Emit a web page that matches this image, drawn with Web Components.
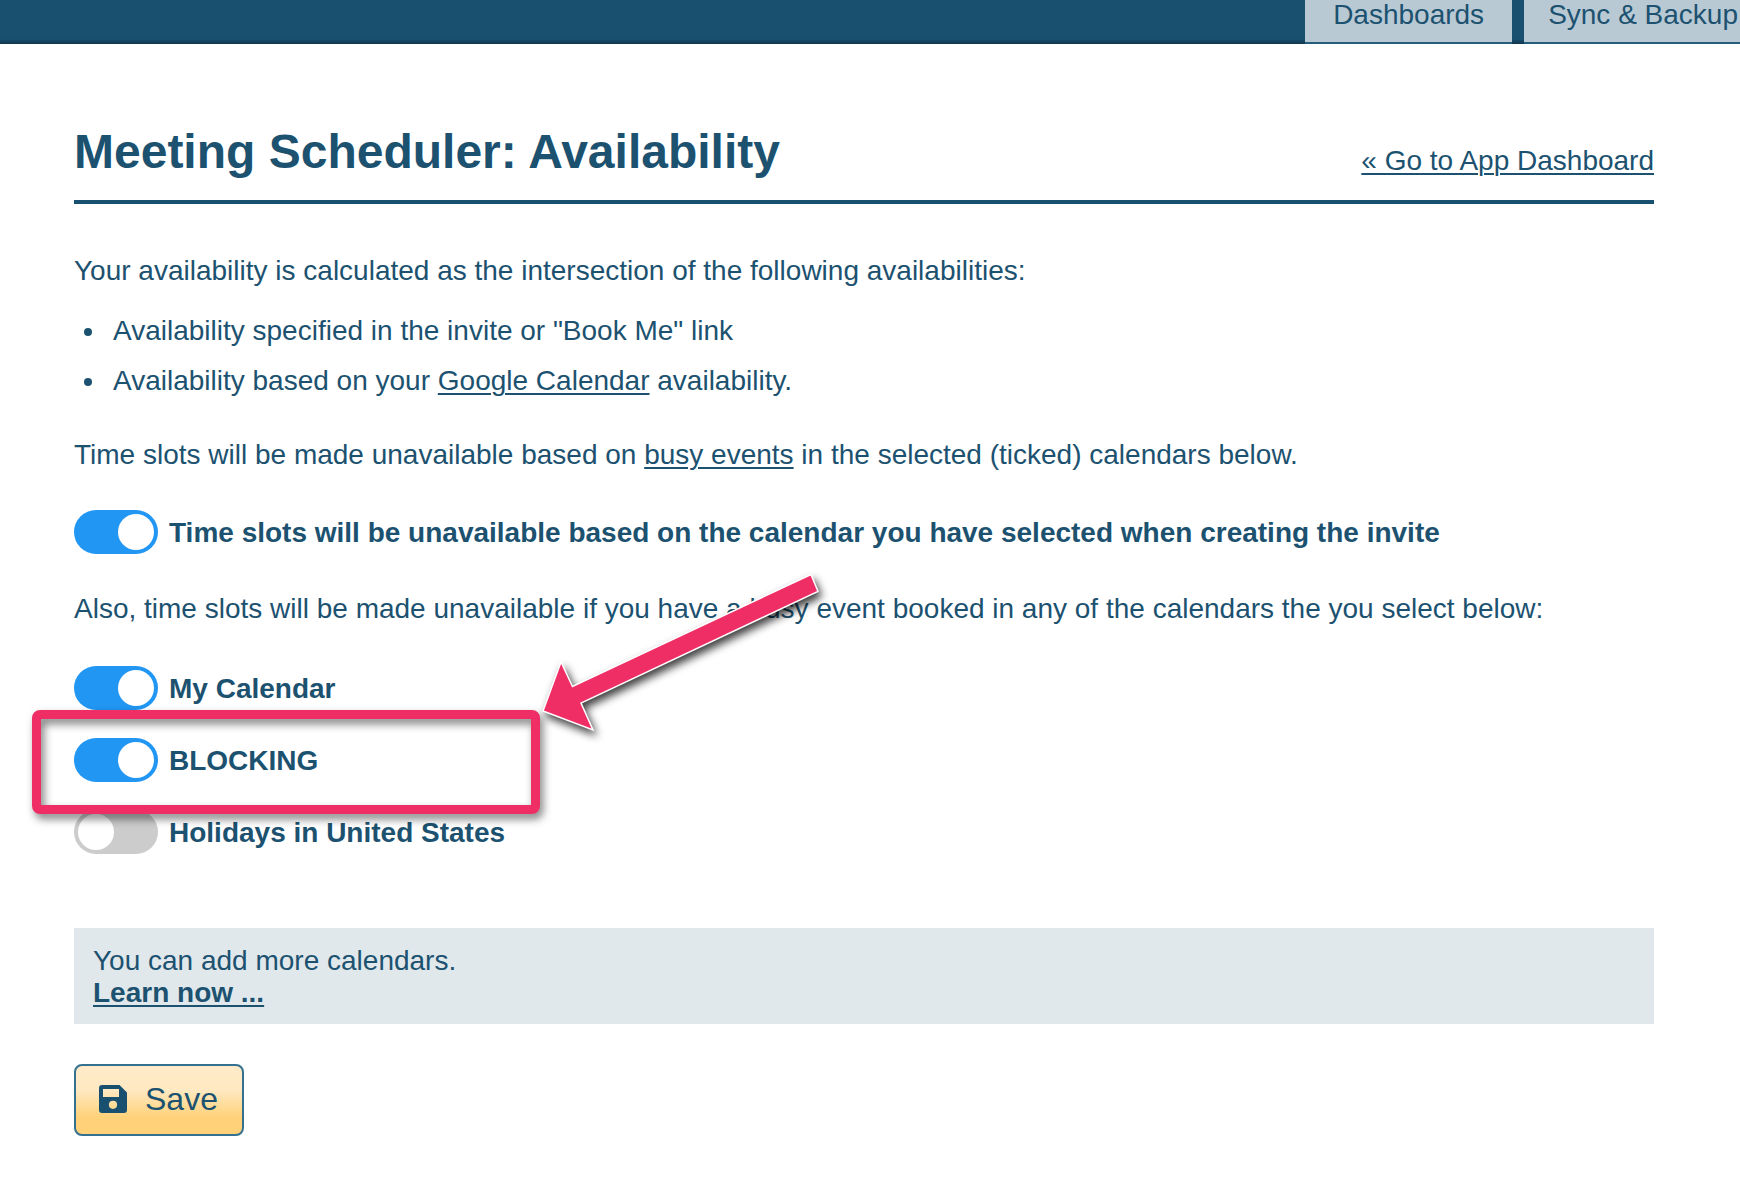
<!DOCTYPE html>
<html lang="en">
<head>
<meta charset="utf-8">
<meta name="viewport" content="width=device-width, initial-scale=1">
<title>Meeting Scheduler: Availability</title>
<style>
    :root {
        --ink: #1c5270;
        --bar: #19506f;
        --tab: #b9c9d4;
        --on: #2196f3;
        --off: #cccccc;
        --mark: #f02e66;
        --note: #e1e8ec;
    }
    body {
        margin: 0;
        background: #fff;
        color: var(--ink);
        font: 28px/32px "Liberation Sans", Arial, sans-serif;
    }
</style>
</head>
<body>
<scheduler-page></scheduler-page>

<script>
class NavTabs extends HTMLElement {
    constructor() {
        super();
        this.attachShadow({ mode: "open" });
        this.shadowRoot.innerHTML = `
            <style>
                :host {
                    display: block;
                    overflow: hidden;
                    background: linear-gradient(var(--bar) 39px, #0f364c 44px);
                }
                nav {
                    display: flex;
                    justify-content: flex-end;
                    gap: 12px;
                    margin-right: -22px;
                }
                ::slotted(a) {
                    padding: 0 28px 12px;
                    line-height: 30px;
                    color: var(--ink);
                    background: var(--tab);
                    border-bottom: 2px solid #255d7c;
                    text-decoration: none;
                    white-space: nowrap;
                }
                ::slotted(a:last-child) {
                    padding-left: 24px;
                    padding-right: 24px;
                }
            </style>
            <nav><slot></slot></nav>
        `;
    }
}

class PageHeading extends HTMLElement {
    constructor() {
        super();
        this.attachShadow({ mode: "open" });
        this.shadowRoot.innerHTML = `
            <style>
                :host {
                    display: flex;
                    justify-content: space-between;
                    align-items: flex-end;
                    padding-bottom: 20px;
                    border-bottom: 4px solid var(--bar);
                }
                h1 {
                    margin: 0;
                    font-size: 48px;
                    line-height: 56px;
                }
                ::slotted(a) {
                    padding-bottom: 3px;
                }
            </style>
            <h1><slot></slot></h1>
            <slot name="link"></slot>
        `;
    }
}

class ToggleSwitch extends HTMLElement {
    constructor() {
        super();
        this.attachShadow({ mode: "open" });
        this.shadowRoot.innerHTML = `
            <style>
                :host {
                    display: block;
                    position: relative;
                }
                label {
                    display: flex;
                    align-items: center;
                    gap: 11px;
                    font-weight: bold;
                }
                span {
                    padding-top: 2px;
                }
                input {
                    appearance: none;
                    display: flex;
                    flex: none;
                    box-sizing: border-box;
                    width: 84px;
                    height: 44px;
                    margin: 0;
                    padding: 4px;
                    border-radius: 22px;
                    background: var(--off);
                }
                input::before {
                    content: "";
                    width: 36px;
                    height: 36px;
                    border-radius: 50%;
                    background: #fff;
                }
                input:checked {
                    justify-content: flex-end;
                    background: var(--on);
                }
            </style>
            <label><input type="checkbox"><span><slot></slot></span></label>
            <slot name="callout"></slot>
        `;
        this.shadowRoot.querySelector("input").checked = this.hasAttribute("checked");
    }
}

// pink frame and arrow, laid over the row it is slotted into
class CalloutMark extends HTMLElement {
    constructor() {
        super();
        this.attachShadow({ mode: "open" });
        this.shadowRoot.innerHTML = `
            <style>
                :host {
                    position: absolute;
                    z-index: 1;
                    top: -28px;
                    left: -42px;
                    width: 508px;
                    height: 104px;
                    pointer-events: none;
                }
                .frame {
                    box-sizing: border-box;
                    height: 100%;
                    border: 9px solid var(--mark);
                    border-radius: 8px;
                    filter: drop-shadow(3px 5px 4px rgba(0, 0, 0, .5));
                }
                svg {
                    position: absolute;
                    left: 500px;
                    bottom: 68px;
                    overflow: visible;
                    filter: drop-shadow(3px 5px 4px rgba(0, 0, 0, .75));
                }
            </style>
            <div class="frame"></div>
            <svg width="300" height="180" viewBox="0 0 300 180" aria-hidden="true">
                <path d="M11 145 29 96 40.500 120.500 279 8.500 286 25.500 49 137 61 164Z"
                    fill="#f02e66" stroke="#fff" stroke-width="1.500"/>
            </svg>
        `;
    }
}

class InfoNote extends HTMLElement {
    constructor() {
        super();
        this.attachShadow({ mode: "open" });
        this.shadowRoot.innerHTML = `
            <style>
                :host {
                    display: flex;
                    flex-direction: column;
                    align-items: flex-start;
                    padding: 17px 19px 15px;
                    background: var(--note);
                }
            </style>
            <slot></slot>
        `;
    }
}

class SaveButton extends HTMLElement {
    constructor() {
        super();
        this.attachShadow({ mode: "open" });
        this.shadowRoot.innerHTML = `
            <style>
                :host {
                    display: flex;
                }
                button {
                    display: flex;
                    align-items: center;
                    gap: 18px;
                    padding: 15px 24px 17px 23px;
                    border: 2px solid #34708f;
                    border-radius: 8px;
                    background: linear-gradient(#ffebca, #ffe9c2 35%, #ffd27a 75%, #ffd27a);
                    color: inherit;
                    font: inherit;
                    font-size: 32px;
                    line-height: 36px;
                }
            </style>
            <button type="submit">
                <svg width="28" height="28" viewBox="0 0 28 28" aria-hidden="true">
                    <path fill="#19506f" fill-rule="evenodd"
                        d="M3 0H20.500L28 7.500V25a3 3 0 0 1-3 3H3a3 3 0 0 1-3-3V3a3 3 0 0 1 3-3Z
                           M4 4V12H20V4Z M14 15.700a4.100 4.100 0 1 0 0 8.200a4.100 4.100 0 1 0 0-8.200Z"/>
                </svg>
                <slot></slot>
            </button>
        `;
    }
}

class SchedulerPage extends HTMLElement {
    constructor() {
        super();
        this.attachShadow({ mode: "open" });
        this.shadowRoot.innerHTML = `
            <style>
                :host {
                    display: block;
                }
                main {
                    padding: 80px 86px 64px 74px;
                }
                a {
                    color: inherit;
                    text-decoration-thickness: 2px;
                    text-underline-offset: 3px;
                }
                p {
                    margin: 0 0 39px;
                }
                .intro {
                    margin: 51px 0 28px;
                }
                ul {
                    display: flex;
                    flex-direction: column;
                    gap: 18px;
                    margin: 0 0 42px;
                    padding-left: 33px;
                }
                li {
                    padding-left: 6px;
                }
                .also {
                    margin: 39px 0 41px;
                }
                .calendars {
                    display: flex;
                    flex-direction: column;
                    gap: 28px;
                    margin-bottom: 74px;
                }
                save-button {
                    margin-top: 40px;
                }
            </style>
            <nav-tabs>
                <a href="#dashboards">Dashboards</a>
                <a href="#sync">Sync &amp; Backup</a>
            </nav-tabs>
            <main>
                <page-heading>Meeting Scheduler: Availability<a slot="link" href="#app">« Go to App Dashboard</a></page-heading>
                <p class="intro">Your availability is calculated as the intersection of the following availabilities:</p>
                <ul>
                    <li>Availability specified in the invite or "Book Me" link</li>
                    <li>Availability based on your <a href="#google">Google Calendar</a> availability.</li>
                </ul>
                <p>Time slots will be made unavailable based on <a href="#busy">busy events</a> in the selected (ticked) calendars below.</p>
                <toggle-switch checked>Time slots will be unavailable based on the calendar you have selected when creating the invite</toggle-switch>
                <p class="also">Also, time slots will be made unavailable if you have a busy event booked in any of the calendars the you select below:</p>
                <div class="calendars">
                    <toggle-switch checked>My Calendar</toggle-switch>
                    <toggle-switch checked>BLOCKING<callout-mark slot="callout"></callout-mark></toggle-switch>
                    <toggle-switch>Holidays in United States</toggle-switch>
                </div>
                <info-note>
                    <span>You can add more calendars.</span>
                    <a href="#learn"><b>Learn now ...</b></a>
                </info-note>
                <save-button>Save</save-button>
            </main>
        `;
    }
}

customElements.define("nav-tabs", NavTabs);
customElements.define("page-heading", PageHeading);
customElements.define("toggle-switch", ToggleSwitch);
customElements.define("callout-mark", CalloutMark);
customElements.define("info-note", InfoNote);
customElements.define("save-button", SaveButton);
customElements.define("scheduler-page", SchedulerPage);
</script>
</body>
</html>
